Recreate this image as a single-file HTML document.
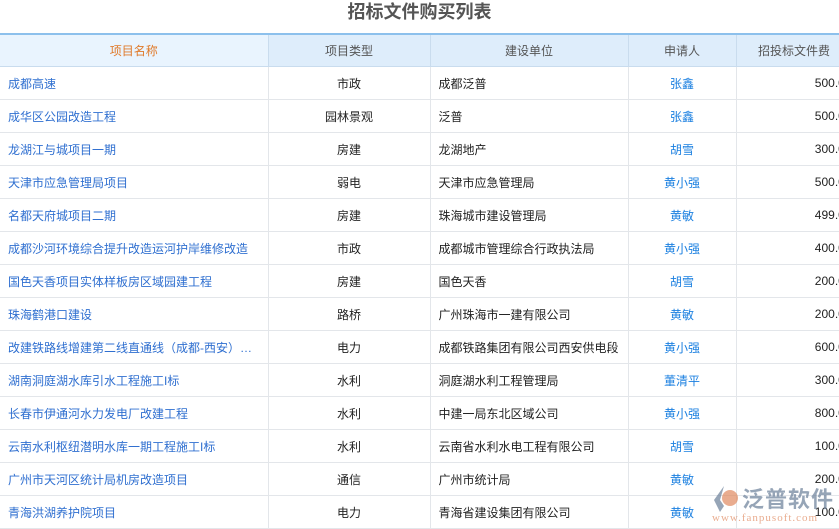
<!DOCTYPE html>
<html><head><meta charset="utf-8"><style>
body{margin:0;width:839px;height:529px;overflow:hidden;background:#fff;font-family:"Liberation Sans","Noto Sans CJK SC",sans-serif;font-size:12px;}
.title{position:absolute;left:0;top:0;width:839px;height:34px;text-align:center;line-height:25px;font-size:18px;font-weight:bold;color:#555;}
table{position:absolute;left:0;top:33px;border-collapse:collapse;table-layout:fixed;width:852px;}
td,th{height:32px;border:1px solid #e3e6ea;padding:0 8px;white-space:nowrap;overflow:hidden;text-overflow:ellipsis;}
th{background:#deedfb;font-weight:normal;color:#555;border-color:#c9dcee;}
th.f{background:#e9f4fe;color:#e07a2a;border-left:none}
tr.h th{border-top:2px solid #8cc0ec;height:31px}
td.a{color:#2f6fd0;border-left:none}
td.c{text-align:center;color:#222}
td.u{color:#222}
td.p{text-align:center;color:#1a7fe0}
td.m{text-align:right;color:#222;padding-right:0}
</style></head><body>
<div class="title">招标文件购买列表</div>
<table>
<colgroup><col style="width:268px"><col style="width:162px"><col style="width:198px"><col style="width:108px"><col style="width:116px"></colgroup>
<tr class="h"><th class="f">项目名称</th><th>项目类型</th><th>建设单位</th><th>申请人</th><th>招投标文件费</th></tr>
<tr><td class="a">成都高速</td><td class="c">市政</td><td class="u">成都泛普</td><td class="p">张鑫</td><td class="m">500.00</td></tr>
<tr><td class="a">成华区公园改造工程</td><td class="c">园林景观</td><td class="u">泛普</td><td class="p">张鑫</td><td class="m">500.00</td></tr>
<tr><td class="a">龙湖江与城项目一期</td><td class="c">房建</td><td class="u">龙湖地产</td><td class="p">胡雪</td><td class="m">300.00</td></tr>
<tr><td class="a">天津市应急管理局项目</td><td class="c">弱电</td><td class="u">天津市应急管理局</td><td class="p">黄小强</td><td class="m">500.00</td></tr>
<tr><td class="a">名都天府城项目二期</td><td class="c">房建</td><td class="u">珠海城市建设管理局</td><td class="p">黄敏</td><td class="m">499.00</td></tr>
<tr><td class="a">成都沙河环境综合提升改造运河护岸维修改造</td><td class="c">市政</td><td class="u">成都城市管理综合行政执法局</td><td class="p">黄小强</td><td class="m">400.00</td></tr>
<tr><td class="a">国色天香项目实体样板房区域园建工程</td><td class="c">房建</td><td class="u">国色天香</td><td class="p">胡雪</td><td class="m">200.00</td></tr>
<tr><td class="a">珠海鹤港口建设</td><td class="c">路桥</td><td class="u">广州珠海市一建有限公司</td><td class="p">黄敏</td><td class="m">200.00</td></tr>
<tr><td class="a">改建铁路线增建第二线直通线（成都-西安）电力工程</td><td class="c">电力</td><td class="u">成都铁路集团有限公司西安供电段</td><td class="p">黄小强</td><td class="m">600.00</td></tr>
<tr><td class="a">湖南洞庭湖水库引水工程施工I标</td><td class="c">水利</td><td class="u">洞庭湖水利工程管理局</td><td class="p">董清平</td><td class="m">300.00</td></tr>
<tr><td class="a">长春市伊通河水力发电厂改建工程</td><td class="c">水利</td><td class="u">中建一局东北区域公司</td><td class="p">黄小强</td><td class="m">800.00</td></tr>
<tr><td class="a">云南水利枢纽潜明水库一期工程施工I标</td><td class="c">水利</td><td class="u">云南省水利水电工程有限公司</td><td class="p">胡雪</td><td class="m">100.00</td></tr>
<tr><td class="a">广州市天河区统计局机房改造项目</td><td class="c">通信</td><td class="u">广州市统计局</td><td class="p">黄敏</td><td class="m">200.00</td></tr>
<tr><td class="a">青海洪湖养护院项目</td><td class="c">电力</td><td class="u">青海省建设集团有限公司</td><td class="p">黄敏</td><td class="m">100.00</td></tr>
</table>
<div style="position:absolute;left:708px;top:480px;width:130px;height:46px;opacity:.7">
<svg width="30" height="30" style="position:absolute;left:2px;top:4px" viewBox="0 0 30 30"><path d="M14 2 L4 16 L10 28 L14 22 L10 16 Z" fill="#6b7f99"/><circle cx="20" cy="14" r="8" fill="#e08a60"/></svg>
<div style="position:absolute;left:34px;top:2px;font-size:22px;color:#6b7f99;font-weight:bold;letter-spacing:1px">泛普软件</div>
<div style="position:absolute;left:4px;top:32px;font-size:11px;color:#e08a60;font-family:'Liberation Serif',serif;letter-spacing:1px">www.fanpusoft.com</div>
</div>
</body></html>
